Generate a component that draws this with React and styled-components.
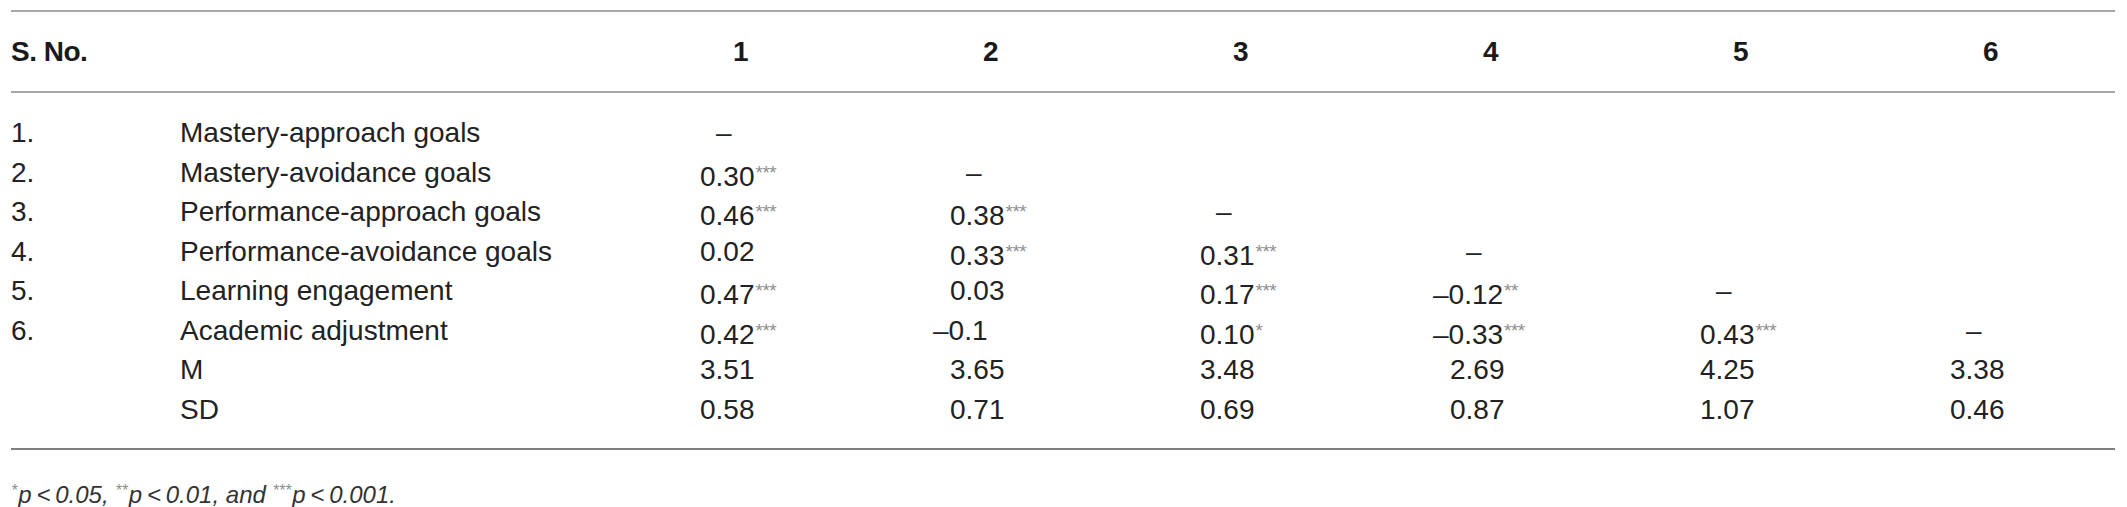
import React from 'react';
import styled, { createGlobalStyle } from 'styled-components';

const GlobalStyle = createGlobalStyle`
  html, body {
    margin: 0;
    padding: 0;
    background: #ffffff;
  }
  body {
    font-family: "Liberation Sans", Arial, Helvetica, sans-serif;
    color: #222222;
  }
`;

const Page = styled.div`
  padding: 10px 12px 0 11px;
  width: 2127px;
  box-sizing: border-box;
`;

const Table = styled.div`
  border-top: 2px solid #a8a8a8;
  border-bottom: 2px solid #7f7f7f;
`;

const Grid = styled.div`
  display: grid;
  grid-template-columns: 169px 520px repeat(5, 250px) 1fr;
`;

const HeadRow = styled(Grid)`
  border-bottom: 2px solid #a8a8a8;
  padding: 20px 0 19px;
  font-size: 28px;
  line-height: 40px;
  font-weight: 700;
  color: #1a1a1a;
`;

const HeadTitle = styled.div`
  grid-column: span 2;
  letter-spacing: -0.5px;
`;

const HeadNum = styled.div`
  padding-left: 33px;
`;

const Body = styled.div`
  padding: 20px 0 19px;
`;

const Row = styled(Grid)`
  height: 39.5px;
  font-size: 28px;
  line-height: 39.5px;
  white-space: nowrap;
`;

const Cell = styled.div`
  padding-left: ${(p) => (p.$dash ? '16px' : '0')};
`;

const Val = styled.span`
  margin-left: ${(p) => (p.$neg ? '-17px' : '0')};
`;

const Sup = styled.span`
  font-size: 19px;
  color: #8e8e8e;
  vertical-align: 7px;
  margin-left: 1px;
  letter-spacing: -0.5px;
`;

const Note = styled.p`
  margin: 29px 0 0;
  font-size: 24px;
  line-height: 24px;
  font-style: italic;
  color: #333333;
`;

const NoteSup = styled.span`
  font-size: 16px;
  color: #8e8e8e;
  vertical-align: 7px;
  margin-right: 1px;
`;

const rows = [
  { no: '1.', label: 'Mastery-approach goals', cells: ['-'] },
  { no: '2.', label: 'Mastery-avoidance goals', cells: [['0.30', '***'], '-'] },
  { no: '3.', label: 'Performance-approach goals', cells: [['0.46', '***'], ['0.38', '***'], '-'] },
  { no: '4.', label: 'Performance-avoidance goals', cells: [['0.02'], ['0.33', '***'], ['0.31', '***'], '-'] },
  { no: '5.', label: 'Learning engagement', cells: [['0.47', '***'], ['0.03'], ['0.17', '***'], ['–0.12', '**'], '-'] },
  {
    no: '6.',
    label: 'Academic adjustment',
    cells: [['0.42', '***'], ['–0.1'], ['0.10', '*'], ['–0.33', '***'], ['0.43', '***'], '-'],
  },
  { no: '', label: 'M', cells: [['3.51'], ['3.65'], ['3.48'], ['2.69'], ['4.25'], ['3.38']] },
  { no: '', label: 'SD', cells: [['0.58'], ['0.71'], ['0.69'], ['0.87'], ['1.07'], ['0.46']] },
];

const ValueCell = ({ value }) => {
  if (value === '-') return <Cell $dash>–</Cell>;
  if (!value) return <Cell />;
  const [num, stars] = value;
  return (
    <Cell>
      <Val $neg={num.startsWith('–')}>{num}</Val>
      {stars && <Sup>{stars}</Sup>}
    </Cell>
  );
};

const App = () => {
  return (
    <Page>
      <GlobalStyle />
      <Table>
        <HeadRow>
          <HeadTitle>S. No.</HeadTitle>
          {[1, 2, 3, 4, 5, 6].map((n) => (
            <HeadNum key={n}>{n}</HeadNum>
          ))}
        </HeadRow>
        <Body>
          {rows.map((r, i) => (
            <Row key={i}>
              <Cell>{r.no}</Cell>
              <Cell>{r.label}</Cell>
              {[0, 1, 2, 3, 4, 5].map((c) => (
                <ValueCell key={c} value={r.cells[c]} />
              ))}
            </Row>
          ))}
        </Body>
      </Table>
      <Note>
        <NoteSup>*</NoteSup>p{'\u2009'}&lt;{'\u2009'}0.05, <NoteSup>**</NoteSup>p{'\u2009'}&lt;{'\u2009'}0.01, and{' '}
        <NoteSup>***</NoteSup>p{'\u2009'}&lt;{'\u2009'}0.001.
      </Note>
    </Page>
  );
};

export default App;
